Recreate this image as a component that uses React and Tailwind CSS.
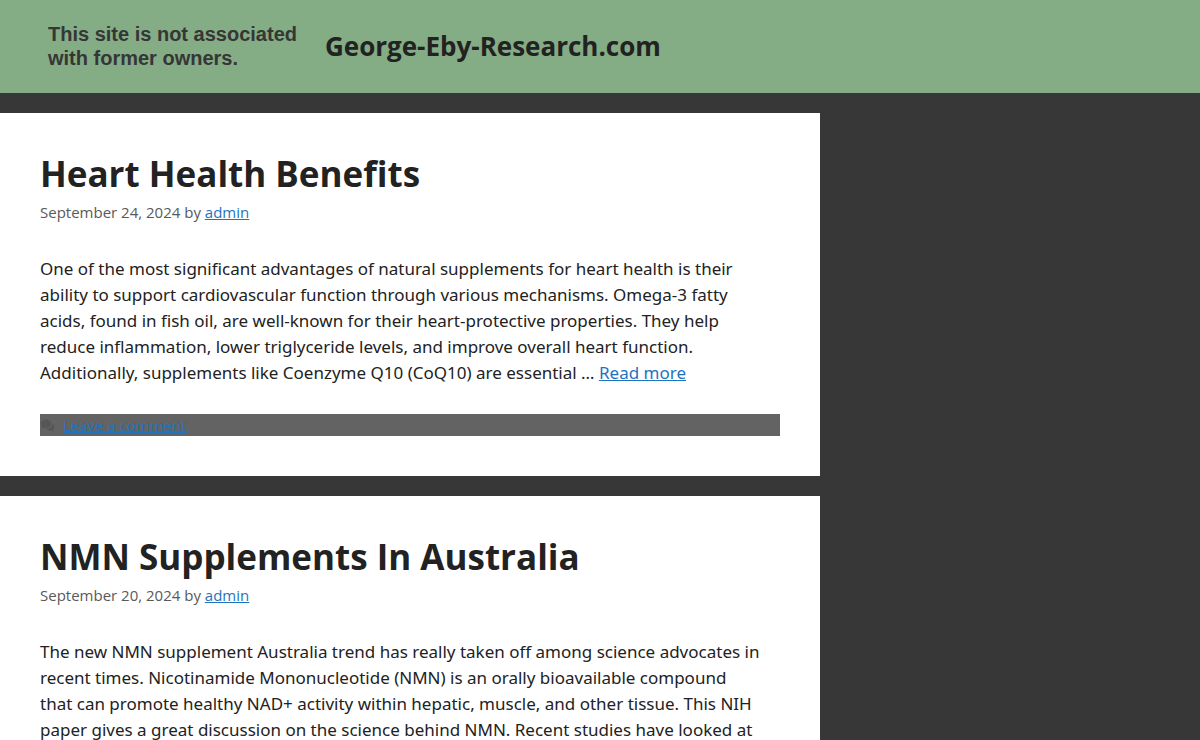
const posts = [
  {
    title: "Heart Health Benefits",
    date: "September 24, 2024",
    lines: [
      "One of the most significant advantages of natural supplements for heart health is their",
      "ability to support cardiovascular function through various mechanisms. Omega-3 fatty",
      "acids, found in fish oil, are well-known for their heart-protective properties. They help",
      "reduce inflammation, lower triglyceride levels, and improve overall heart function.",
      "Additionally, supplements like Coenzyme Q10 (CoQ10) are essential … ",
    ],
    more: true,
  },
  {
    title: "NMN Supplements In Australia",
    date: "September 20, 2024",
    lines: [
      "The new NMN supplement Australia trend has really taken off among science advocates in",
      "recent times. Nicotinamide Mononucleotide (NMN) is an orally bioavailable compound",
      "that can promote healthy NAD+ activity within hepatic, muscle, and other tissue. This NIH",
      "paper gives a great discussion on the science behind NMN. Recent studies have looked at",
    ],
    more: false,
  },
];

function CommentsIcon() {
  return (
    <svg viewBox="0 0 16 16" className="h-[15px] w-[15px] fill-[#55555a]" aria-hidden="true">
      <path d="M6.500 1.500C3.500 1.500 1 3.500 1 6c0 1.200.6 2.200 1.500 3L1.700 11.200l2.700-1.100c.7.200 1.400.3 2.100.3 3 0 5.500-2 5.500-4.400S9.500 1.500 6.500 1.500z" />
      <path d="M13.200 6.300c0 2.900-2.900 5.100-6.400 5.200.9 1.200 2.400 1.900 4 1.900.5 0 1-.1 1.400-.2l2.500 1.100-.7-2c.7-.6 1.200-1.500 1.200-2.500 0-1.400-.8-2.700-2-3.500z" />
    </svg>
  );
}

function Post({ post }) {
  return (
    <article className="bg-white p-10">
      <h2 className="text-[35px] leading-[42px] font-bold text-[#222222]">{post.title}</h2>
      <p className="mt-1.5 text-[15px] leading-[22px] text-[#595959]">
        {post.date} by <a href="#author" className="text-[#1e73be] underline">admin</a>
      </p>
      <p className="mt-[33px] font-['Noto_Sans','Open_Sans',sans-serif] text-[17px] leading-[26px] text-[#222222]">
        {post.lines.map((line) => (
          <span key={line} className="block whitespace-nowrap">
            {line}
            {post.more && line.endsWith("… ") && (
              <a href="#more" className="text-[#1e73be] underline">Read more</a>
            )}
          </span>
        ))}
      </p>
      <footer className="mt-7 flex items-center gap-2 bg-[#636363] text-[15px] leading-[22px]">
        <CommentsIcon />
        <a href="#comments" className="text-[#1e73be] underline">Leave a comment</a>
      </footer>
    </article>
  );
}

export default function App() {
  return (
    <div className="h-screen overflow-hidden bg-[#373737] font-['Open_Sans','Noto_Sans',sans-serif]">
      <header className="flex items-center gap-7 bg-[#84ac85] px-12 pt-[22px] pb-[23px]">
        <p className="font-['Liberation_Sans',Arial,sans-serif] text-[20px] leading-6 font-bold text-[#363636]">
          This site is not associated
          <br />
          with former owners.
        </p>
        <a href="#home" className="text-[26px] leading-8 font-bold text-[#222222]">George-Eby-Research.com</a>
      </header>
      <main className="mt-5 flex w-[820px] max-w-full flex-col gap-5">
        {posts.map((post) => (
          <Post key={post.title} post={post} />
        ))}
      </main>
    </div>
  );
}
